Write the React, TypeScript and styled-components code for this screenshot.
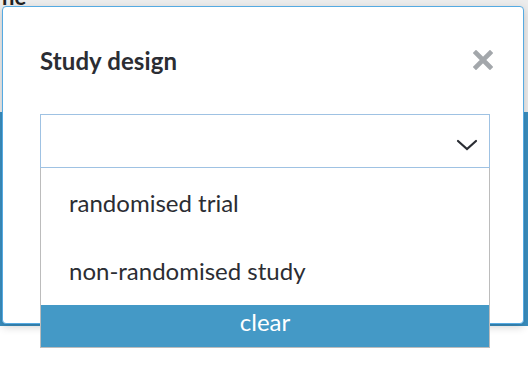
import React from "react";
import styled, { createGlobalStyle } from "styled-components";

const GlobalStyle = createGlobalStyle`
    html, body {
        margin: 0;
        padding: 0;
        width: 528px;
        height: 372px;
        overflow: hidden;
        background: #ffffff;
        font-family: Lato, "Open Sans", sans-serif;
    }
`;

const options: string[] = ["randomised trial", "non-randomised study"];

const Chevron = () => (
    <svg width="22" height="12" viewBox="0 0 22 12">
        <path d="M2 2 L11 10 L20 2" fill="none" stroke="#2a2d33" strokeWidth="2.2" strokeLinecap="round" />
    </svg>
);

const CloseIcon = () => (
    <svg width="20" height="20" viewBox="0 0 20 20">
        <path d="M3 3 L17 17 M17 3 L3 17" stroke="#a3a7ab" strokeWidth="4.6" strokeLinecap="square" />
    </svg>
);

const App = () => {
    return (
        <Page>
            <GlobalStyle />
            <Backdrop>
                <BackTitle>ne</BackTitle>
                <BackBar />
            </Backdrop>
            <Modal>
                <Header>
                    <Title>Study design</Title>
                    <CloseButton>
                        <CloseIcon />
                    </CloseButton>
                </Header>
                <SelectWrap>
                    <SelectBox>
                        <Chevron />
                    </SelectBox>
                    <Dropdown>
                        {options.map((value, index) => (
                            <Option key={`opt-${index}`}>{value}</Option>
                        ))}
                        <ClearButton>clear</ClearButton>
                    </Dropdown>
                </SelectWrap>
            </Modal>
        </Page>
    );
};

export default App;

const Page = styled.div`
    position: relative;
    width: 528px;
    height: 372px;
    overflow: hidden;
`;

const Backdrop = styled.div`
    display: flex;
    flex-direction: column;
    height: 326px;
    background: #e9e9e9;
`;

const BackTitle = styled.div`
    height: 129px;
    margin-top: -17px;
    padding-left: 2px;
    font-weight: 700;
    font-size: 22px;
    color: #222;
    background: #ececec;
`;

const BackBar = styled.div`
    flex: 1;
    background: #3a8fc0;
`;

const Modal = styled.div`
    position: absolute;
    left: 2px;
    top: 6px;
    width: 522px;
    height: 318px;
    background: #ffffff;
    border: 1px solid #55aae2;
    border-radius: 4px;
    box-shadow: 0 3px 8px rgba(0, 0, 0, 0.18);
    padding: 0 34px 0 37px;
    box-sizing: border-box;
    display: flex;
    flex-direction: column;
`;

const Header = styled.div`
    display: flex;
    align-items: center;
    justify-content: space-between;
    height: 58px;
    margin-top: 24px;
    margin-bottom: 25px;
`;

const Title = styled.h2`
    margin: 0;
    font-size: 24px;
    font-weight: 700;
    color: #2b2d33;
    letter-spacing: 0.1px;
`;

const CloseButton = styled.div`
    display: flex;
    margin-right: -4px;
`;

const SelectWrap = styled.div`
    position: relative;
    width: 450px;
`;

const SelectBox = styled.div`
    height: 54px;
    border: 1px solid #9fc2e3;
    display: flex;
    align-items: center;
    justify-content: flex-end;
    padding-right: 11px;
    padding-top: 8px;
    box-sizing: border-box;
    background: #ffffff;
`;

const Dropdown = styled.div`
    position: absolute;
    left: 0;
    top: 54px;
    width: 450px;
    background: #ffffff;
    border: 1px solid #bcbcbc;
    border-top: none;
    box-sizing: border-box;
    display: flex;
    flex-direction: column;
`;

const Option = styled.div`
    height: 68.5px;
    display: flex;
    align-items: center;
    padding-left: 28px;
    font-size: 24px;
    color: #2b2d33;
`;

const ClearButton = styled.div`
    height: 42px;
    background: #4499c6;
    color: #ffffff;
    font-size: 24px;
    text-align: center;
    line-height: 34px;
`;
